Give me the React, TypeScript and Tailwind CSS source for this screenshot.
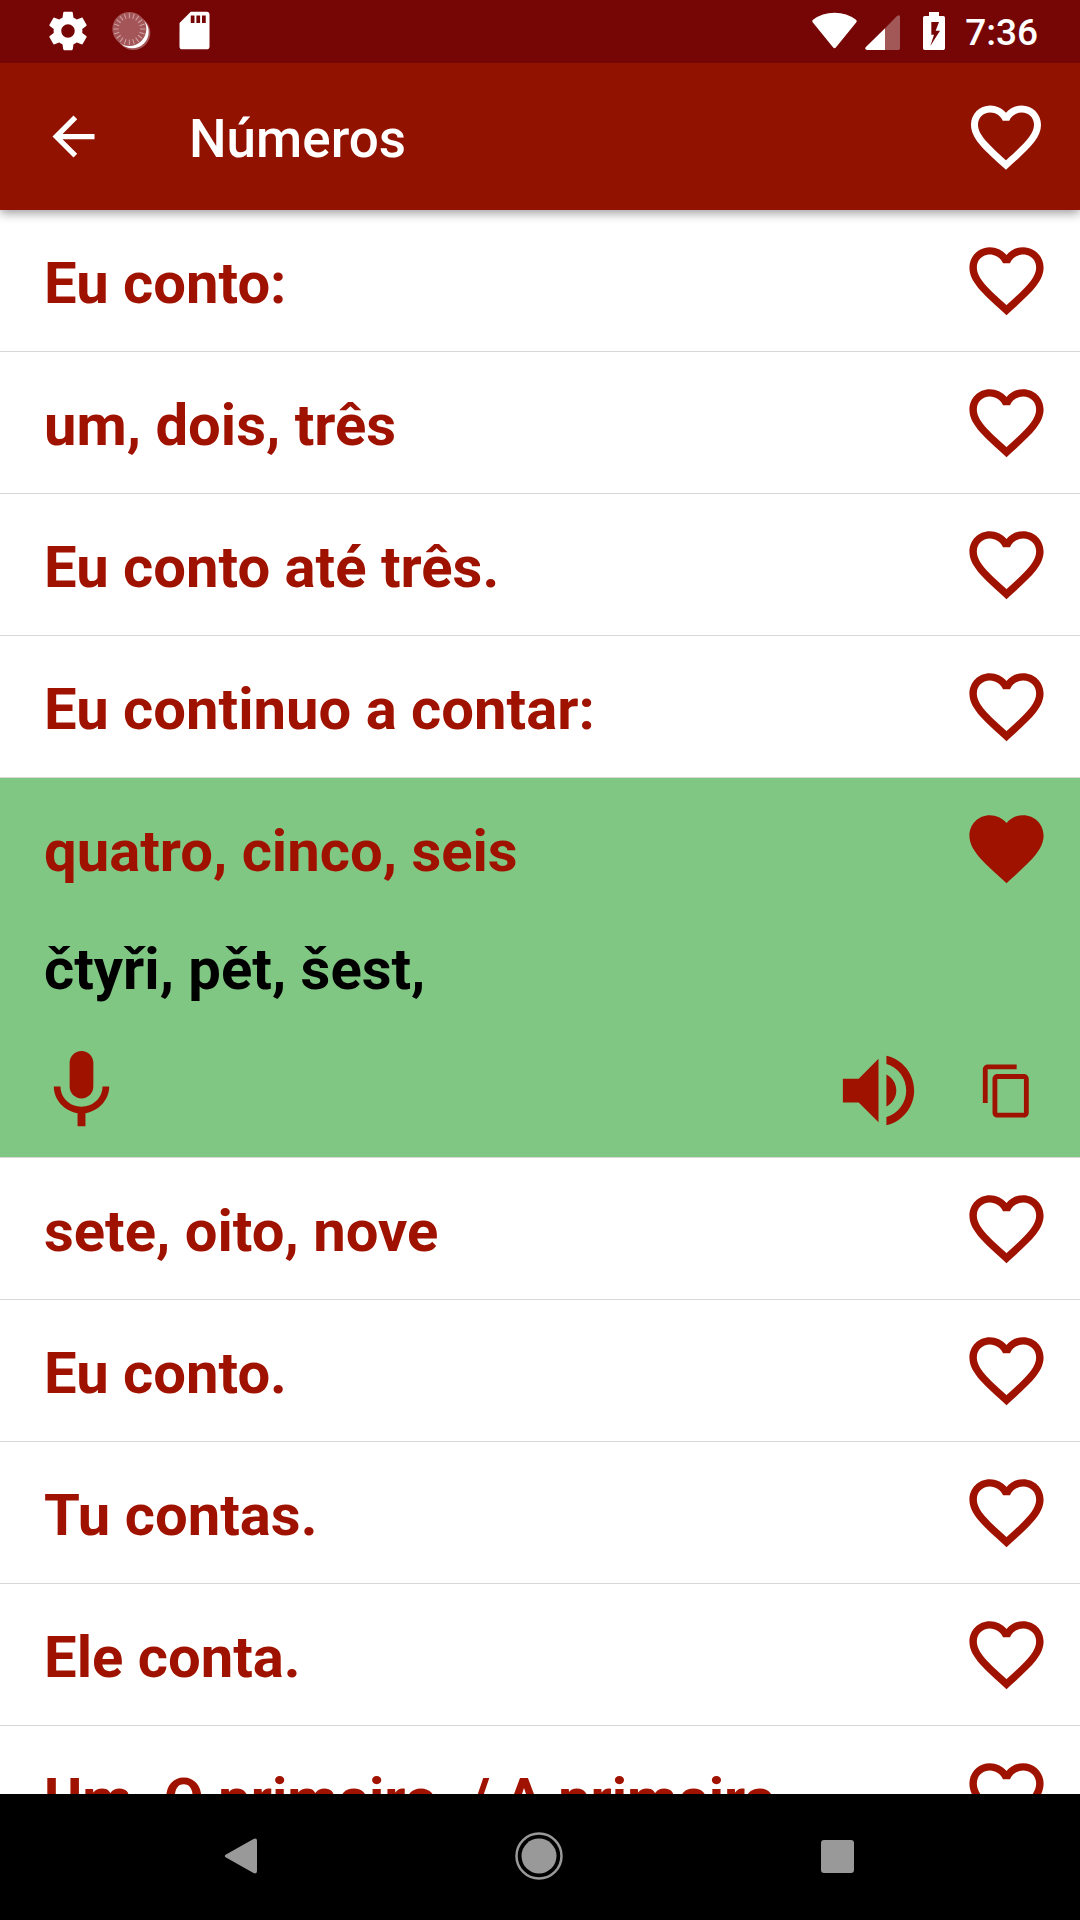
import { useState } from "react";

const HEART =
  "M12 21.35l-1.45-1.32C5.4 15.36 2 12.28 2 8.5 2 5.42 4.42 3 7.5 3c1.74 0 3.41.81 4.5 2.09C13.09 3.81 14.76 3 16.5 3 19.58 3 22 5.42 22 8.5c0 3.78-3.4 6.86-8.55 11.54L12 21.35z";
const HEART_OUTLINE =
  "M16.5 3c-1.74 0-3.41.81-4.5 2.09C10.91 3.81 9.24 3 7.5 3 4.42 3 2 5.42 2 8.5c0 3.78 3.4 6.86 8.55 11.54L12 21.35l1.45-1.32C18.6 15.36 22 12.28 22 8.5 22 5.42 19.58 3 16.5 3zm-4.4 15.55l-.1.1-.1-.1C7.14 14.24 4 11.39 4 8.5 4 6.5 5.5 5 7.5 5c1.54 0 3.04.99 3.57 2.36h1.87C13.46 5.99 14.96 5 16.5 5c2 0 3.5 1.5 3.5 3.5 0 2.89-3.14 5.74-7.9 10.05z";
const BACK = "M20 11H7.83l5.59-5.59L12 4l-8 8 8 8 1.41-1.41L7.83 13H20v-2z";
const MIC =
  "M12 14c1.66 0 2.99-1.34 2.99-3L15 5c0-1.66-1.34-3-3-3S9 3.34 9 5v6c0 1.66 1.34 3 3 3zm5.3-3c0 3-2.54 5.1-5.3 5.1S6.7 14 6.7 11H5c0 3.41 2.72 6.23 6 6.72V21h2v-3.28c3.28-.48 6-3.3 6-6.72h-1.7z";
const VOLUME =
  "M3 9v6h4l5 5V4L7 9H3zm13.5 3c0-1.77-1.02-3.29-2.5-4.03v8.05c1.48-.73 2.5-2.25 2.5-4.02zM14 3.23v2.06c2.89.86 5 3.54 5 6.71s-2.11 5.85-5 6.71v2.06c4.01-.91 7-4.49 7-8.77s-2.99-7.86-7-8.77z";
const COPY =
  "M16 1H4c-1.1 0-2 .9-2 2v14h2V3h12V1zm3 4H8c-1.1 0-2 .9-2 2v14c0 1.1.9 2 2 2h11c1.1 0 2-.9 2-2V7c0-1.1-.9-2-2-2zm0 16H8V7h11v14z";
const GEAR =
  "M19.43 12.98c.04-.32.07-.64.07-.98s-.03-.66-.07-.98l2.11-1.65c.19-.15.24-.42.12-.64l-2-3.46c-.12-.22-.39-.3-.61-.22l-2.49 1c-.52-.4-1.08-.73-1.69-.98l-.38-2.65C14.46 2.18 14.25 2 14 2h-4c-.25 0-.46.18-.49.42l-.38 2.65c-.61.25-1.17.59-1.69.98l-2.49-1c-.23-.09-.49 0-.61.22l-2 3.46c-.13.22-.07.49.12.64l2.11 1.65c-.04.32-.07.65-.07.98s.03.66.07.98l-2.11 1.65c-.19.15-.24.42-.12.64l2 3.46c.12.22.39.3.61.22l2.49-1c.52.4 1.08.73 1.69.98l.38 2.65c.03.24.24.42.49.42h4c.25 0 .46-.18.49-.42l.38-2.65c.61-.25 1.17-.59 1.69-.98l2.49 1c.23.09.49 0 .61-.22l2-3.46c.12-.22.07-.49-.12-.64l-2.11-1.65zM12 15.5c-1.93 0-3.5-1.57-3.5-3.5s1.57-3.5 3.5-3.5 3.5 1.57 3.5 3.5-1.57 3.5-3.5 3.5z";
const SD_CARD =
  "M18 2h-8L4.02 8 4 20.6c0 .8.6 1.4 1.4 1.4h13.2c.8 0 1.4-.6 1.4-1.4V3.4c0-.8-.6-1.4-1.4-1.4H18zm-6 6h-2V4h2v4zm3 0h-2V4h2v4zm3 0h-2V4h2v4z";

function Icon({ d, className }: { d: string; className: string }) {
  return (
    <svg viewBox="0 0 24 24" className={className} fill="currentColor" aria-hidden="true">
      <path d={d} />
    </svg>
  );
}

function StatusBar() {
  const ticks = Array.from({ length: 20 }, (_, i) => i * 18);
  return (
    <div className="relative z-20 flex h-[63px] items-center justify-between bg-[#760606] pr-[42px] pb-[2px] pl-[45px] text-white">
      <div className="flex items-center gap-5">
        <Icon d={GEAR} className="size-[46px]" />
        <svg viewBox="0 0 123 123" className="size-[41px]" aria-hidden="true">
          <circle cx="67" cy="69" r="51" fill="#a35557" />
          <circle cx="64" cy="66" r="49" fill="#fff" />
          <circle cx="55" cy="57" r="51" fill="#a35557" />
          {ticks.map((a) => (
            <path
              key={a}
              d="M55 9v16"
              stroke="#cfa3a4"
              strokeWidth="3"
              transform={`rotate(${a} 55 57)`}
            />
          ))}
        </svg>
        <Icon d={SD_CARD} className="size-[45px]" />
      </div>
      <div className="flex items-center">
        <svg viewBox="0 0 136 110" className="h-[37px] w-[45px]" fill="currentColor" aria-hidden="true">
          <path d="M2 30 Q-1 26 4 22 Q30 1 68 1 Q106 1 132 22 Q137 26 134 30 L72 106 Q68 111 64 106Z" />
        </svg>
        <svg viewBox="0 0 105 105" className="mt-1 ml-2 size-[35px]" fill="currentColor" aria-hidden="true">
          <path d="M60 40V105H5Q-2 103 2 97Z" />
          <path d="M60 40 L96 3 Q105 -3 105 6V100Q105 105 100 105H60Z" opacity=".33" />
        </svg>
        <svg viewBox="0 0 66 114" className="ml-[23px] h-[38px] w-[22px]" fill="currentColor" aria-hidden="true">
          <path
            fillRule="evenodd"
            d="M18 0H48V12H61Q66 12 66 17V109Q66 114 61 114H5Q0 114 0 109V17Q0 12 5 12H18ZM25 30V68H33L22 102L51 56H38L48 30Z"
          />
        </svg>
        <span className="ml-[20px] pt-1 text-[37px] leading-[44px] font-medium">7:36</span>
      </div>
    </div>
  );
}

function AppBar() {
  return (
    <header className="relative z-10 flex h-[147px] items-center bg-[#921200] pr-8 pl-[42px] text-white shadow-[0_3px_10px_rgba(0,0,0,0.4)]">
      <button type="button" aria-label="Voltar">
        <Icon d={BACK} className="size-[63px]" />
      </button>
      <h1 className="ml-[84px] flex-1 pt-1 text-[53px] leading-[62px] font-medium">Números</h1>
      <button type="button" aria-label="Favoritos">
        <Icon d={HEART_OUTLINE} className="size-[84px]" />
      </button>
    </header>
  );
}

type Phrase = { text: string; translation?: string };

const PHRASES: Phrase[] = [
  { text: "Eu conto:" },
  { text: "um, dois, três" },
  { text: "Eu conto até três." },
  { text: "Eu continuo a contar:" },
  { text: "quatro, cinco, seis", translation: "čtyři, pět, šest," },
  { text: "sete, oito, nove" },
  { text: "Eu conto." },
  { text: "Tu contas." },
  { text: "Ele conta." },
  { text: "Um. O primeiro. / A primeira." },
];

function PhraseRow({ phrase }: { phrase: Phrase }) {
  const open = phrase.translation !== undefined;
  const [liked, setLiked] = useState(open);
  return (
    <li className={`border-b border-[#d8d8d8] ${open ? "bg-[#81c784]" : "bg-white"}`}>
      <div className="flex h-[141px] items-center pr-[29px] pl-11">
        <p className="flex-1 pt-1 text-[58px] leading-[68px] font-bold whitespace-nowrap">{phrase.text}</p>
        <button type="button" aria-label="Favorito" aria-pressed={liked} onClick={() => setLiked(!liked)}>
          <Icon d={liked ? HEART : HEART_OUTLINE} className="size-[89px]" />
        </button>
      </div>
      {open && (
        <>
          <p className="mt-4 pl-11 text-[58px] leading-[68px] font-bold text-black">{phrase.translation}</p>
          <div className="mt-10 flex items-center pr-11 pb-[19px] pl-[34px]">
            <button type="button" aria-label="Gravar" className="mr-auto">
              <Icon d={MIC} className="size-[95px]" />
            </button>
            <button type="button" aria-label="Ouvir">
              <Icon d={VOLUME} className="size-[95px]" />
            </button>
            <button type="button" aria-label="Copiar" className="ml-[52px]">
              <Icon d={COPY} className="size-[58px]" />
            </button>
          </div>
        </>
      )}
    </li>
  );
}

function NavigationBar() {
  return (
    <nav className="flex h-[126px] shrink-0 items-center justify-center gap-[250px] bg-black pr-[2px] pb-[2px] text-[#999]">
      <button type="button" aria-label="Back">
        <svg viewBox="0 0 48 48" className="size-12" fill="currentColor" aria-hidden="true">
          <path d="M9 22.500 L36.500 7Q40 5.500 40 9V39Q40 42.500 36.500 41L9 25.500Q6.500 24 9 22.500Z" />
        </svg>
      </button>
      <button type="button" aria-label="Home">
        <svg viewBox="0 0 48 48" className="size-12" aria-hidden="true">
          <circle cx="24" cy="24" r="22.500" fill="none" stroke="currentColor" strokeWidth="2.500" />
          <circle cx="24" cy="24" r="17.500" fill="currentColor" />
        </svg>
      </button>
      <button type="button" aria-label="Overview">
        <svg viewBox="0 0 48 48" className="size-12" fill="currentColor" aria-hidden="true">
          <rect x="8" y="8" width="33" height="33" rx="3" />
        </svg>
      </button>
    </nav>
  );
}

export default function App() {
  return (
    <div className="flex h-screen flex-col bg-white font-['Roboto',sans-serif]">
      <StatusBar />
      <AppBar />
      <main className="min-h-0 flex-1 overflow-hidden">
        <ul className="text-[#a01200]">
          {PHRASES.map((p) => (
            <PhraseRow key={p.text} phrase={p} />
          ))}
        </ul>
      </main>
      <NavigationBar />
    </div>
  );
}
